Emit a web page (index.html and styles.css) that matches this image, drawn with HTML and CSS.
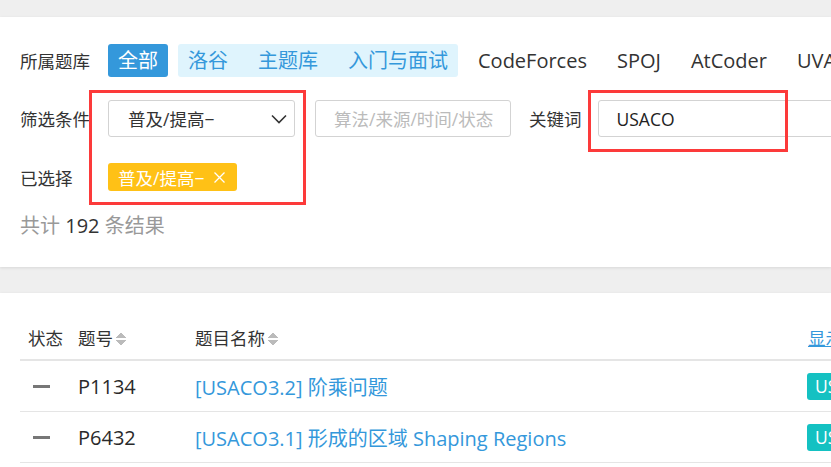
FILE: index.html
```html
<!DOCTYPE html>
<html lang="zh-CN">
<head>
<meta charset="utf-8">
<title>题库</title>
<link rel="stylesheet" href="styles.css">
</head>
<body>
<div class="page">
  <section class="card filter">
    <div class="row row-lib">
      <span class="label">所属题库</span>
      <div class="opts">
        <span class="opt active">全部</span>
        <span class="group">
          <span class="opt sub">洛谷</span>
          <span class="opt sub">主题库</span>
          <span class="opt sub">入门与面试</span>
        </span>
        <span class="opt">CodeForces</span>
        <span class="opt">SPOJ</span>
        <span class="opt">AtCoder</span>
        <span class="opt">UVA</span>
      </div>
    </div>
    <div class="row row-cond">
      <span class="label">筛选条件</span>
      <div class="select">
        <span>普及/提高−</span>
        <svg class="chev" width="16" height="10" viewBox="0 0 16 10"><path d="M1 1.5 L8 8.5 L15 1.5" fill="none" stroke="#333" stroke-width="1.6"/></svg>
      </div>
      <div class="input placeholder">算法/来源/时间/状态</div>
      <span class="label kw">关键词</span>
      <div class="input keyword">USACO</div>
    </div>
    <div class="row row-sel">
      <span class="label">已选择</span>
      <span class="tag">普及/提高−<svg class="x" width="11" height="11" viewBox="0 0 11 11"><path d="M0.5 0.5 L10.5 10.5 M10.5 0.5 L0.5 10.5" stroke="#fff" stroke-width="1.3" fill="none"/></svg></span>
    </div>
    <div class="count">共计 <b>192</b> 条结果</div>
    <div class="mark mark-a"></div>
    <div class="mark mark-b"></div>
  </section>

  <section class="card list">
    <table class="table">
      <colgroup>
        <col class="w-st"><col class="w-id"><col class="w-name"><col class="w-tag">
      </colgroup>
      <thead>
        <tr>
          <th>状态</th>
          <th>题号<span class="sort"></span></th>
          <th>题目名称<span class="sort"></span></th>
          <th><a class="show">显示算法</a></th>
        </tr>
      </thead>
      <tbody>
        <tr>
          <td><span class="dash"></span></td>
          <td>P1134</td>
          <td><a>[USACO3.2] 阶乘问题</a></td>
          <td><span class="src">USACO</span></td>
        </tr>
        <tr>
          <td><span class="dash"></span></td>
          <td>P6432</td>
          <td><a>[USACO3.1] 形成的区域 Shaping Regions</a></td>
          <td><span class="src">USACO</span></td>
        </tr>
      </tbody>
    </table>
  </section>
</div>
</body>
</html>
```

FILE: styles.css
```css
html, body {
  margin: 0;
  padding: 0;
  overflow: hidden;
}
body {
  background: #efefef;
  font-family: "Open Sans", "Noto Sans CJK SC", sans-serif;
  color: #333;
  width: 831px;
  height: 467px;
}
.page {
  padding-top: 17px;
  display: flex;
  flex-direction: column;
  gap: 26px;
}
.card {
  background: #fff;
  box-shadow: 0 1px 3px rgba(0,0,0,0.1);
  position: relative;
  overflow: hidden;
}
.filter {
  padding: 27px 0 0 20px;
  height: 223px;
  overflow: visible;
}
.row {
  display: flex;
  align-items: center;
  white-space: nowrap;
}
.row > * {
  flex: none;
}
.label {
  font-size: 17.5px;
  width: 88px;
  color: #333;
}
.opts {
  display: flex;
  align-items: center;
  gap: 10px;
}
.opt {
  font-size: 20px;
  line-height: 33px;
  height: 33px;
  padding: 0 10px;
  border-radius: 3px;
  color: #333;
  flex: none;
}
.opt.active {
  background: #3498db;
  color: #fff;
}
.group {
  display: flex;
  gap: 10px;
  background: #dff4fd;
  border-radius: 3px;
  flex: none;
}
.opt.sub {
  color: #3498db;
}
.row-cond {
  margin-top: 23px;
}
.select {
  width: 187px;
  height: 37px;
  box-sizing: border-box;
  border: 1px solid #d3d3d3;
  border-radius: 3px;
  display: flex;
  align-items: center;
  justify-content: space-between;
  padding: 0 7px 0 19px;
  font-size: 17.5px;
  color: #333;
}
.chev {
  display: block;
}
.input {
  height: 37px;
  box-sizing: border-box;
  border: 1px solid #d3d3d3;
  border-radius: 3px;
  display: flex;
  align-items: center;
  padding: 0 18px;
  font-size: 17.5px;
}
.placeholder {
  width: 196px;
  margin-left: 20px;
  color: #bbb;
}
.label.kw {
  width: auto;
  margin-left: 18px;
  margin-right: 16px;
}
.keyword {
  width: 300px;
  color: #222;
}
.row-sel {
  margin-top: 26px;
}
.tag {
  display: flex;
  align-items: center;
  background: #ffc116;
  color: #fff;
  font-size: 17.5px;
  height: 28px;
  padding: 0 12px 0 10px;
  border-radius: 3px;
}
.tag .x {
  margin-left: 10px;
  display: block;
}
.count {
  margin-top: 20px;
  font-size: 20px;
  line-height: 30px;
  color: #999;
}
.count b {
  font-weight: normal;
  color: #333;
}
.mark {
  position: absolute;
  border: 3px solid #fc3a3a;
  box-sizing: border-box;
}
.mark-a {
  left: 89px;
  top: 73px;
  width: 217px;
  height: 115px;
}
.mark-b {
  left: 588px;
  top: 73px;
  width: 200px;
  height: 62px;
}
.list {
  padding: 22px 0 0 20px;
  height: 200px;
}
.table {
  border-collapse: collapse;
  table-layout: fixed;
  width: 900px;
  white-space: nowrap;
}
.w-st { width: 50px; }
.w-id { width: 117px; }
.w-name { width: 613px; }
.w-tag { width: 120px; }
.table th {
  font-weight: normal;
  font-size: 17.5px;
  text-align: left;
  height: 44px;
  padding: 0 8px;
  border-bottom: 2px solid #e5e5e5;
  vertical-align: middle;
}
.table td {
  font-size: 20px;
  height: 50px;
  padding: 0 8px;
  border-bottom: 1px solid #e5e5e5;
  vertical-align: middle;
  color: #2a2a2a;
}
.table a {
  color: #3498db;
}
.show {
  text-decoration: underline;
  font-size: 17.5px;
}
.sort {
  display: inline-block;
  width: 10px;
  height: 14px;
  margin-left: 3px;
  vertical-align: -1px;
  background:
    linear-gradient(to bottom right, transparent 50%, #bbb 50%) 0 0 / 5px 6px no-repeat,
    linear-gradient(to bottom left, transparent 50%, #bbb 50%) 5px 0 / 5px 6px no-repeat,
    linear-gradient(to top right, transparent 50%, #bbb 50%) 0 8px / 5px 6px no-repeat,
    linear-gradient(to top left, transparent 50%, #bbb 50%) 5px 8px / 5px 6px no-repeat;
}
.dash {
  display: block;
  width: 17px;
  height: 3px;
  margin-left: 5px;
  background: #777;
}
.src {
  display: inline-block;
  background: #14c1c2;
  color: #fff;
  font-size: 17.5px;
  height: 27px;
  line-height: 27px;
  padding: 0 8px;
  border-radius: 3px;
  margin-left: -1px;
}
```
